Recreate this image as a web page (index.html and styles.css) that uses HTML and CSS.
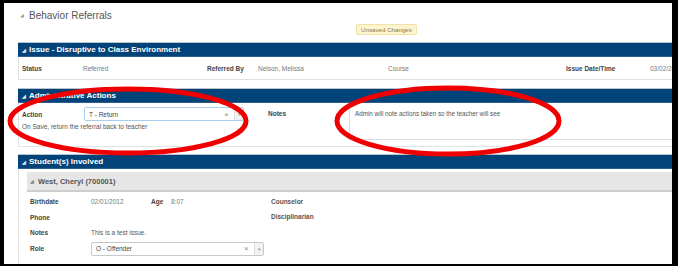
FILE: index.html
```html
<!DOCTYPE html>
<html>
<head>
<meta charset="utf-8">
<link rel="stylesheet" href="styles.css">
</head>
<body>
<div class="frame">
  <div class="page">
    <div class="title"><span class="tri">&#9698;</span>Behavior Referrals</div>
    <div class="badge-row"><span class="badge">Unsaved Changes</span></div>

    <div class="panel p1">
      <div class="phead"><span class="tri w">&#9698;</span>Issue - Disruptive to Class Environment</div>
      <div class="pbody issue">
        <span class="lbl">Status</span><span class="val">Referred</span>
        <span class="lbl">Referred By</span><span class="val">Nelson, Melissa</span>
        <span class="val">Course</span>
        <span class="lbl">Issue Date/Time</span><span class="val">03/02/2017</span>
      </div>
    </div>

    <div class="panel p2">
      <div class="phead"><span class="tri w">&#9698;</span>Administrative Actions</div>
      <div class="pbody admin">
        <div class="acol">
          <div class="arow">
            <span class="lbl alabel">Action</span>
            <div class="sel focus"><span class="stext">T - Return</span><span class="sx">&#215;</span><span class="sarrow">&#9662;</span></div>
          </div>
          <div class="note">On Save, return the referral back to teacher</div>
        </div>
        <span class="lbl nlabel">Notes</span>
        <div class="textarea">Admin will note actions taken so the teacher will see</div>
      </div>
    </div>

    <div class="panel p3">
      <div class="phead"><span class="tri w">&#9698;</span>Student(s) Involved</div>
      <div class="pbody students">
        <div class="subhead"><span class="tri g">&#9698;</span>West, Cheryl (700001)</div>
        <div class="subbody">
          <div class="srow">
            <span class="lbl c1">Birthdate</span><span class="val c2">02/01/2012</span>
            <span class="lbl c3">Age</span><span class="val c4">8:07</span>
            <span class="lbl c5">Counselor</span>
          </div>
          <div class="srow">
            <span class="lbl c1">Phone</span><span class="val c2"></span>
            <span class="lbl c3"></span><span class="val c4"></span>
            <span class="lbl c5 up">Disciplinarian</span>
          </div>
          <div class="srow">
            <span class="lbl c1">Notes</span><span class="val c2 wide">This is a test issue.</span>
          </div>
          <div class="srow role">
            <span class="lbl c1">Role</span>
            <div class="sel rsel"><span class="stext">O - Offender</span><span class="sx">&#215;</span><span class="sarrow">&#9662;</span></div>
          </div>
        </div>
      </div>
    </div>
  </div>

  <svg class="marks" width="668" height="261" viewBox="0 0 668 261">
    <ellipse cx="124" cy="118" rx="118" ry="32" fill="none" stroke="#f00000" stroke-width="5"/>
    <ellipse cx="444" cy="118" rx="111" ry="33" fill="none" stroke="#f00000" stroke-width="5"/>
  </svg>
</div>
</body>
</html>
```

FILE: styles.css
```css
* { box-sizing: border-box; }
html, body { margin: 0; padding: 0; }
body {
  background: #000;
  width: 678px;
  height: 266px;
  overflow: hidden;
  font-family: "Liberation Sans", Arial, sans-serif;
}
.frame {
  position: relative;
  margin: 3px 6px 0 4px;
  width: 668px;
  height: 261px;
  background: #fff;
  overflow: hidden;
}
.page {
  padding-left: 14px;
  margin-right: -30px;
}
.title {
  height: 21px;
  display: flex;
  align-items: center;
  padding-left: 2px;
  padding-top: 3px;
  font-size: 10px;
  color: #555;
}
.tri {
  font-size: 5px;
  color: #999;
  margin-right: 5px;
  position: relative;
  top: 0;
}
.tri.w { color: #dfe7ef; margin-right: 3px; }
.tri.g { color: #888; margin-right: 4px; }
.badge-row {
  height: 11px;
  padding-left: 338px;
  margin-bottom: 7px;
  display: flex;
}
.badge {
  display: inline-flex;
  align-items: center;
  height: 11px;
  padding: 0 4px;
  background: #fcf3cf;
  border: 1px solid #f0e2a8;
  border-radius: 2px;
  font-size: 6.2px;
  color: #8a7a50;
}
.panel { margin-bottom: 7px; }
.p1 { margin-bottom: 8px; }
.phead {
  height: 15px;
  background: #024479;
  border-top: 1px solid #b9c3cc;
  border-bottom: 1px solid #2a5f8f;
  color: #fff;
  font-weight: bold;
  font-size: 8px;
  display: flex;
  align-items: center;
  padding-left: 4px;
}
.pbody {
  border: 1px solid #e2e2e2;
  border-top: none;
  font-size: 6.5px;
  color: #666;
}
.lbl { font-weight: bold; color: #444; }
.val { color: #777; }
.issue {
  height: 23px;
  display: grid;
  grid-template-columns: 61px 124px 51px 130px 178px 84px 1fr;
  align-items: center;
  padding-left: 3px;
}
.admin {
  height: 44px;
  display: flex;
  padding: 4px 0 0 3px;
}
.acol { width: 246px; }
.arow { display: flex; align-items: center; height: 14px; }
.alabel { width: 62px; }
.sel {
  height: 14px;
  border: 1px solid #c8c8c8;
  border-radius: 2px;
  display: flex;
  align-items: center;
  background: #fff;
  color: #444;
}
.sel.focus { width: 160px; border-color: #a9cdee; }
.stext { flex: 1; padding-left: 4px; font-size: 6.5px; }
.sx { color: #888; font-size: 8px; width: 10px; }
.sarrow {
  width: 9px;
  height: 12px;
  border-left: 1px solid #ddd;
  background: #f2f2f2;
  color: #999;
  font-size: 5px;
  display: flex;
  align-items: center;
  justify-content: center;
}
.note { margin-top: 2px; color: #555; }
.nlabel { width: 81px; padding-top: 3px; }
.textarea {
  flex: 1;
  height: 33px;
  border-left: 1px solid #ddd;
  border-bottom: 1px solid #ddd;
  padding: 3px 5px;
  color: #555;
  font-size: 6.3px;
}
.students {
  height: 120px;
  padding: 3px 0 0 8px;
  border-right: none;
  border-bottom: none;
}
.subhead {
  height: 20px;
  background: #e6e6e6;
  border-bottom: 2px solid #cdcdcd;
  display: flex;
  align-items: center;
  padding-left: 3px;
  font-size: 7.5px;
  font-weight: bold;
  color: #555;
}
.subbody { padding: 2px 0 0 3px; }
.srow {
  display: flex;
  align-items: center;
  height: 15.5px;
}
.srow.role { height: 16px; margin-top: 0; }
.c1 { width: 61px; }
.c2 { width: 60px; }
.c3 { width: 20px; }
.c4 { width: 100px; }
.c5 { color: #555; }
.up { position: relative; top: -1px; }
.wide { width: auto; color: #555; }
.rsel { width: 173px; }
.marks {
  position: absolute;
  left: 0;
  top: 0;
  pointer-events: none;
}
```
